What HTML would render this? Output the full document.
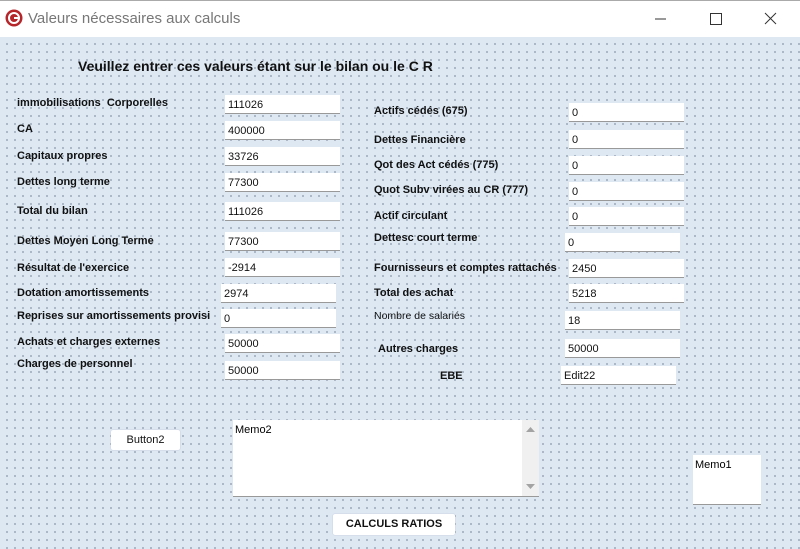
<!DOCTYPE html>
<html><head><meta charset="utf-8"><style>
*{margin:0;padding:0;box-sizing:border-box}
body{width:800px;height:549px;overflow:hidden;font-family:"Liberation Sans",sans-serif;background:#fff;position:relative}
#title{position:absolute;left:0;top:0;width:800px;height:37px;background:#fff;border-top:1px solid #aaa}
#title .t{position:absolute;left:28px;top:9px;font-size:15px;color:#777}
#form{position:absolute;left:0;top:37px;width:800px;height:512px;background-color:#dde8f3;
background-image:radial-gradient(circle,#6b7a8a 0.6px,transparent 0.9px);background-size:8px 8px;background-position:3px 3px}
.l{position:absolute;font-size:11px;font-weight:bold;color:#111;white-space:nowrap}
.n{font-weight:normal}
.e{position:absolute;width:115px;height:19px;background:#fff;border-bottom:1px solid #999;font-size:11px;padding:4px 0 0 3px;color:#111}
.b{position:absolute;background:#fff;border-radius:2px;box-shadow:0 0 1px #aab;font-size:11px;text-align:center;color:#111}
</style></head><body>
<div id="title">
<svg style="position:absolute;left:5px;top:8px" width="18" height="18" viewBox="0 0 18 18"><circle cx="9" cy="9" r="8.5" fill="#b5262b"/><circle cx="9" cy="9" r="5" fill="none" stroke="#fff" stroke-width="2"/><rect x="9" y="8" width="6" height="2" fill="#fff"/></svg>
<div class="t">Valeurs nécessaires aux calculs</div>
<svg style="position:absolute;left:650px;top:10px" width="130" height="16"><line x1="5" y1="8" x2="16" y2="8" stroke="#333"/><rect x="60.5" y="2.5" width="11" height="11" fill="none" stroke="#333"/><path d="M115 2L126 13M126 2L115 13" stroke="#333"/></svg>
</div>
<div id="form"></div>
<div class="l" style="left:78px;top:58px;font-size:14px">Veuillez entrer ces valeurs étant sur le bilan ou le C R</div>

<div class="l" style="left:17px;top:97px">immobilisations&nbsp; Corporelles</div><div class="e" style="left:225px;top:95px">111026</div>
<div class="l" style="left:17px;top:123px">CA</div><div class="e" style="left:225px;top:121px">400000</div>
<div class="l" style="left:17px;top:150px">Capitaux propres</div><div class="e" style="left:225px;top:147px">33726</div>
<div class="l" style="left:17px;top:176px">Dettes long terme</div><div class="e" style="left:225px;top:173px">77300</div>
<div class="l" style="left:17px;top:205px">Total du bilan</div><div class="e" style="left:225px;top:202px">111026</div>
<div class="l" style="left:17px;top:235px">Dettes Moyen Long Terme</div><div class="e" style="left:225px;top:232px">77300</div>
<div class="l" style="left:17px;top:262px">Résultat de l'exercice</div><div class="e" style="left:225px;top:258px">-2914</div>
<div class="l" style="left:17px;top:287px">Dotation amortissements</div><div class="e" style="left:221px;top:284px">2974</div>
<div class="l" style="left:17px;top:310px">Reprises sur amortissements provisi</div><div class="e" style="left:221px;top:309px">0</div>
<div class="l" style="left:17px;top:336px">Achats et charges externes</div><div class="e" style="left:225px;top:334px">50000</div>
<div class="l" style="left:17px;top:358px">Charges de personnel</div><div class="e" style="left:225px;top:361px">50000</div>

<div class="l" style="left:374px;top:105px">Actifs cédés (675)</div><div class="e" style="left:569px;top:103px">0</div>
<div class="l" style="left:374px;top:134px">Dettes Financière</div><div class="e" style="left:569px;top:130px">0</div>
<div class="l" style="left:374px;top:159px">Qot des Act cédés (775)</div><div class="e" style="left:569px;top:156px">0</div>
<div class="l" style="left:374px;top:184px">Quot Subv virées au CR (777)</div><div class="e" style="left:569px;top:182px">0</div>
<div class="l" style="left:374px;top:210px">Actif circulant</div><div class="e" style="left:569px;top:207px">0</div>
<div class="l" style="left:374px;top:232px">Dettesc court terme</div><div class="e" style="left:565px;top:233px">0</div>
<div class="l" style="left:374px;top:262px">Fournisseurs et comptes rattachés</div><div class="e" style="left:569px;top:259px">2450</div>
<div class="l" style="left:374px;top:287px">Total des achat</div><div class="e" style="left:569px;top:284px">5218</div>
<div class="l n" style="left:374px;top:310px;font-size:10.5px">Nombre de salariés</div><div class="e" style="left:565px;top:311px">18</div>
<div class="l" style="left:378px;top:343px">Autres charges</div><div class="e" style="left:565px;top:339px">50000</div>
<div class="l" style="left:440px;top:370px">EBE</div><div class="e" style="left:561px;top:366px">Edit22</div>

<div class="b" style="left:111px;top:430px;width:69px;height:20px;line-height:20px">Button2</div>
<div style="position:absolute;left:233px;top:420px;width:306px;height:77px;background:#fff;border-bottom:1px solid #999;font-size:11px;padding:4px 2px">Memo2
<div style="position:absolute;right:0;top:0;width:17px;height:76px;background:#f0f0f0"><svg width="17" height="76"><path d="M4 12L8.5 7L13 12Z" fill="#a3a3a3"/><path d="M4 64L8.5 69L13 64Z" fill="#a3a3a3"/></svg></div></div>
<div style="position:absolute;left:693px;top:455px;width:68px;height:50px;background:#fff;border-bottom:1px solid #999;font-size:11px;padding:4px 2px">Memo1</div>
<div class="b" style="left:333px;top:514px;width:122px;height:21px;line-height:21px;font-weight:bold">CALCULS RATIOS</div>
</body></html>
